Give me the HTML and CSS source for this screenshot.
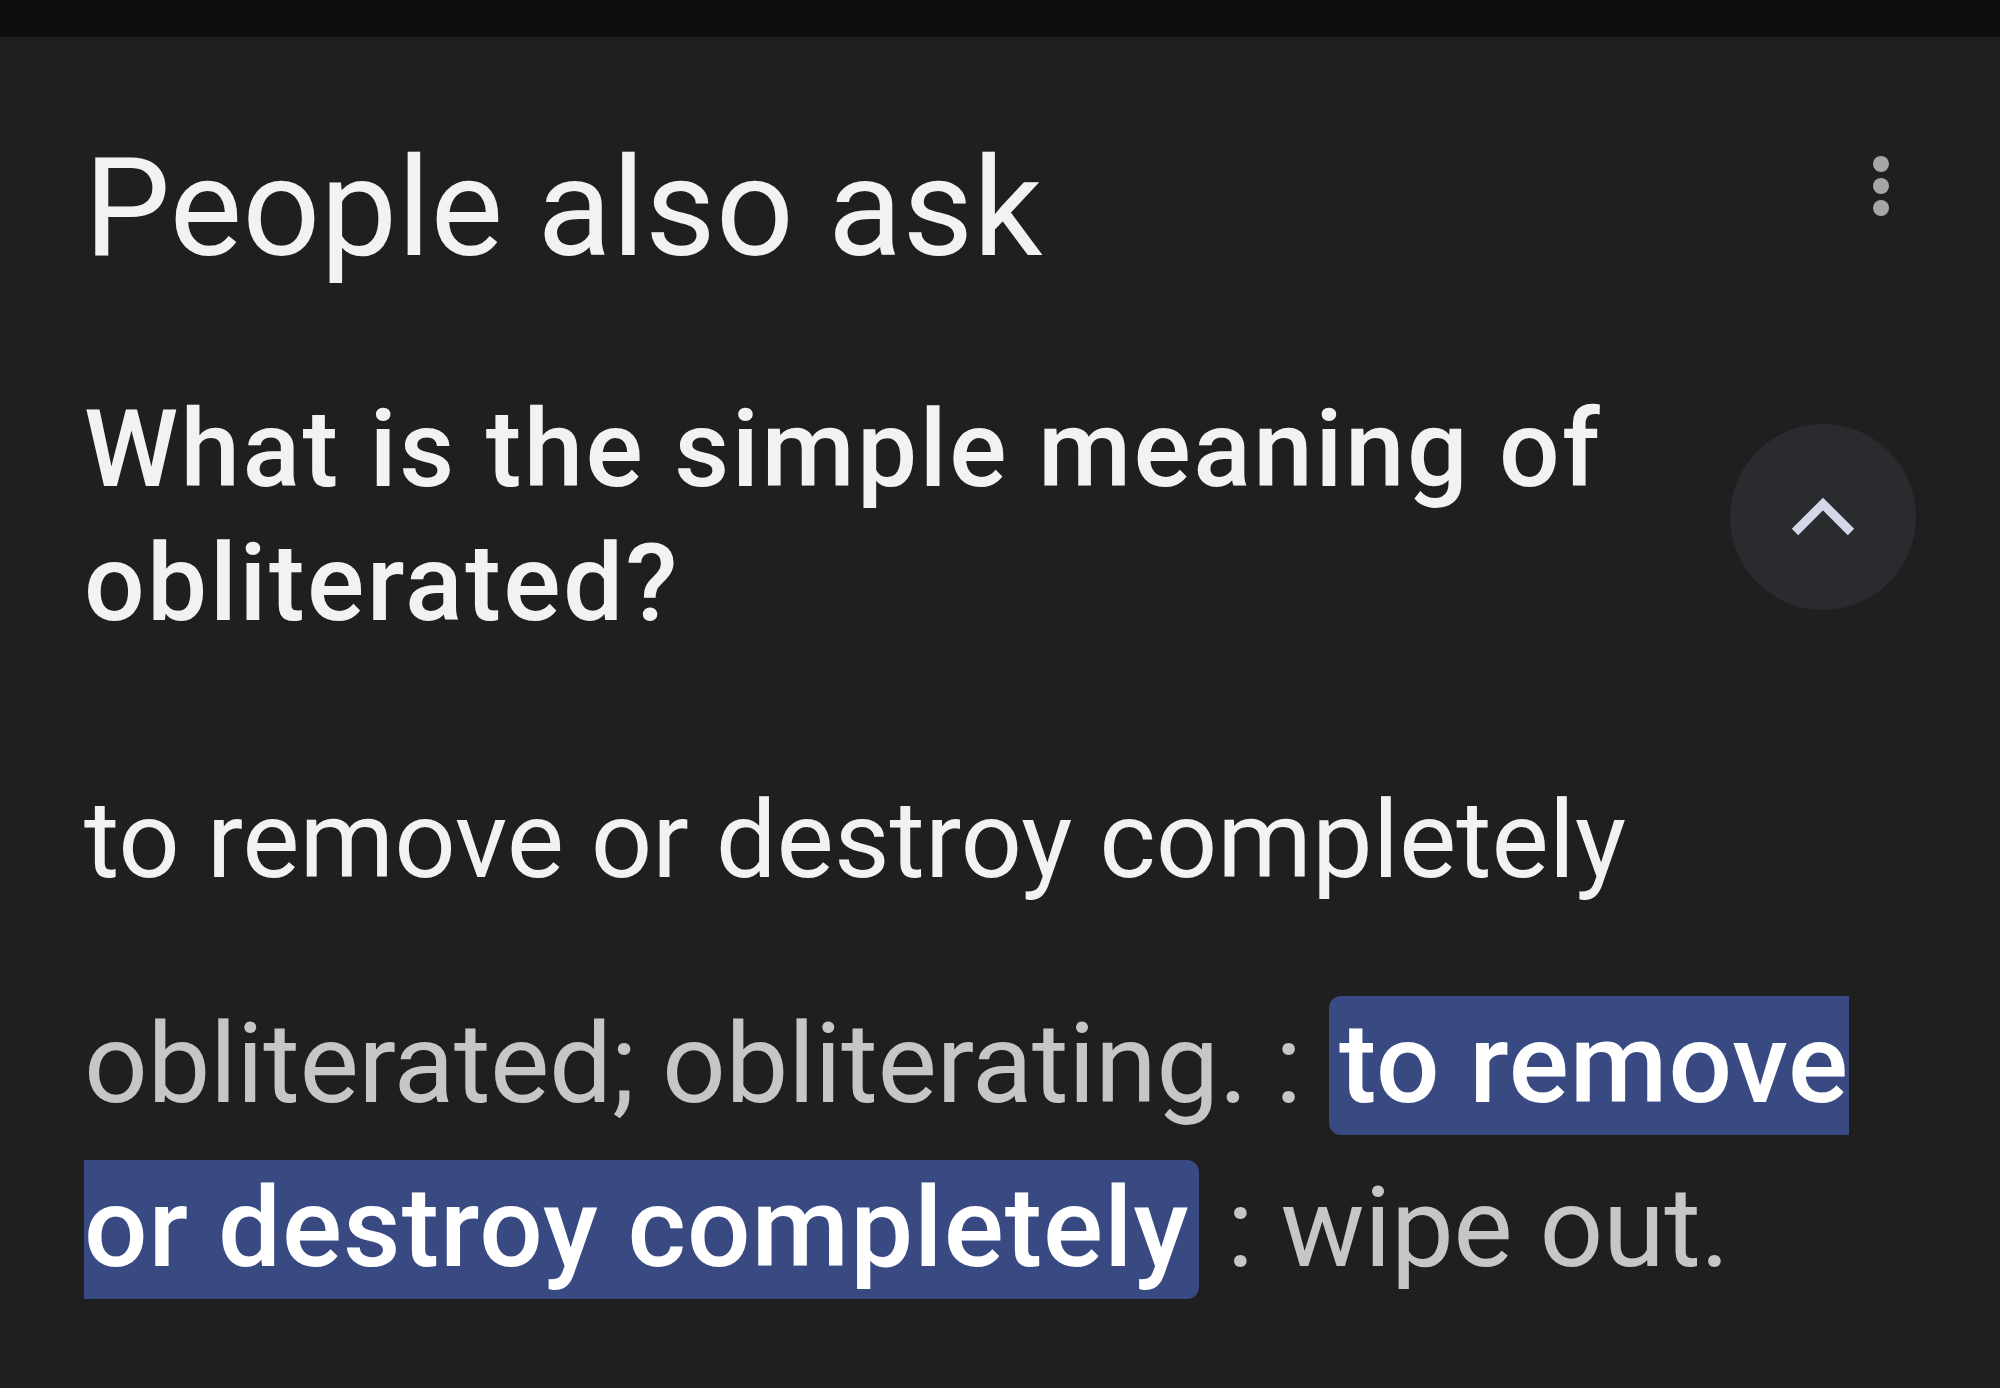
FILE: index.html
```html
<!DOCTYPE html>
<html lang="en">
<head>
  <meta charset="UTF-8">
  <title>People also ask</title>
  <link rel="stylesheet" href="styles.css">
</head>
<body>
  <div class="status-bar"></div>

  <section class="paa">
    <header class="paa-header">
      <h2 class="paa-title">People also ask</h2>
      <button class="more-btn" aria-label="More options">
        <svg width="18" height="62" viewBox="0 0 18 62">
          <circle cx="9" cy="9" r="8" />
          <circle cx="9" cy="31" r="8" />
          <circle cx="9" cy="53" r="8" />
        </svg>
      </button>
    </header>

    <div class="question">
      <h3 class="question-text">What is the simple meaning of obliterated?</h3>
      <button class="toggle-btn" aria-label="Collapse">
        <svg width="64" height="40" viewBox="0 0 64 40">
          <polyline points="4,35 32,7 60,35" />
        </svg>
      </button>
    </div>

    <div class="answer">
      <p class="answer-title">to remove or destroy completely</p>
      <p class="answer-snippet">obliterated; obliterating. : <mark>to remove or destroy completely</mark> : wipe out.</p>
    </div>
  </section>
</body>
</html>
```

FILE: styles.css
```css
html, body {
  margin: 0;
  padding: 0;
  background: #1f1f1f;
  font-family: Roboto, "Noto Sans", sans-serif;
  color: #f4f1f1;
  height: 100%;
  overflow: hidden;
}

.status-bar {
  height: 37px;
  background: #0e0e0e;
}

.paa {
  padding: 88px 84px 0 84px;
}

.paa-header {
  display: flex;
  justify-content: space-between;
  align-items: flex-start;
}

.paa-title {
  margin: 0;
  font-size: 137px;
  line-height: 166px;
  font-weight: 400;
}

.more-btn {
  background: none;
  border: none;
  padding: 0;
  margin: 30px 26px 0 0;
  cursor: pointer;
}

.more-btn circle {
  fill: #a6a6a6;
}

.question {
  display: flex;
  align-items: center;
  gap: 40px;
  margin-top: 92px;
}

.question-text {
  flex: 1;
  margin: 0;
  font-size: 107px;
  line-height: 134px;
  font-weight: 500;
  letter-spacing: 2.4px;
}

.toggle-btn {
  flex: none;
  width: 186px;
  height: 186px;
  border-radius: 50%;
  border: none;
  background: #2a2b2e;
  display: flex;
  align-items: center;
  justify-content: center;
  cursor: pointer;
}

.toggle-btn polyline {
  fill: none;
  stroke: #d4d7ea;
  stroke-width: 9;
}

.answer {
  margin-top: 124px;
}

.answer-title {
  margin: 0;
  font-size: 108px;
  line-height: 130px;
  font-weight: 400;
}

.answer-snippet {
  margin: 77px 0 0 0;
  font-size: 112px;
  line-height: 164px;
  color: #c7c5c5;
  letter-spacing: -0.5px;
}

.answer-snippet mark {
  background: #394a82;
  color: #fff;
  font-weight: 500;
  letter-spacing: 1px;
  padding: 2px 10px 6px 10px;
  border-radius: 12px;
  -webkit-box-decoration-break: slice;
  box-decoration-break: slice;
}
```
